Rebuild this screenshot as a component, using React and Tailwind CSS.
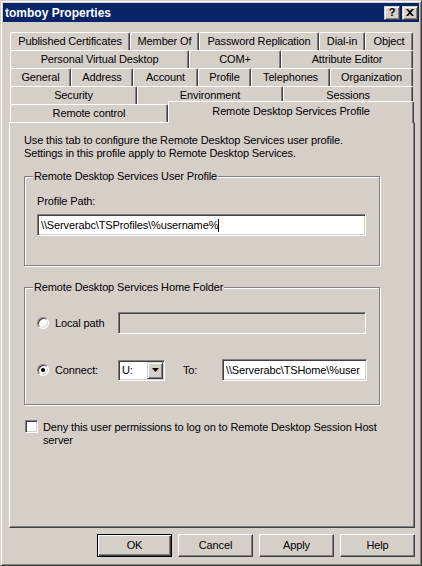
import React from "react";

const rows = [
  [
    ["Published Certificates", "w-[120px]"],
    ["Member Of", "w-[69px]"],
    ["Password Replication", "w-[120px]"],
    ["Dial-in", "w-[46px]"],
    ["Object", "w-[48px]"],
  ],
  [
    ["Personal Virtual Desktop", "w-[179px]"],
    ["COM+", "w-[92px]"],
    ["Attribute Editor", "w-[132px]"],
  ],
  [
    ["General", "w-[61px]"],
    ["Address", "w-[62px]"],
    ["Account", "w-[65px]"],
    ["Profile", "w-[53px]"],
    ["Telephones", "w-[79px]"],
    ["Organization", "w-[83px]"],
  ],
  [
    ["Security", "w-[127px]"],
    ["Environment", "w-[146px]"],
    ["Sessions", "w-[130px]"],
  ],
];

const sunken =
  "border border-t-[#808080] border-l-[#808080] border-b-white border-r-white shadow-[inset_1px_1px_0_#404040,inset_-1px_-1px_0_#d4d0c8]";
const raised =
  "border border-t-white border-l-white border-b-[#404040] border-r-[#404040] shadow-[inset_-1px_-1px_0_#808080]";

function Tab({ label, w }) {
  return (
    <div
      className={`${w} shrink-0 h-[18px] flex items-center justify-center border-t border-l border-r border-t-white border-l-white border-r-[#404040] rounded-t-[2px] shadow-[inset_-1px_0_0_#808080] whitespace-nowrap`}
    >
      {label}
    </div>
  );
}

function Group({ label, className, children }) {
  return (
    <div
      className={`relative w-[356px] border border-[#808080] shadow-[inset_1px_1px_0_#fff,1px_1px_0_#fff] ${className}`}
    >
      <span className="absolute -top-[7px] left-[8px] px-[1px] bg-[#d4d0c8] leading-[13px] whitespace-nowrap">
        {label}
      </span>
      {children}
    </div>
  );
}

function Radio({ checked }) {
  return (
    <div
      className={`w-[12px] h-[12px] rounded-full bg-white flex items-center justify-center ${sunken}`}
    >
      {checked && <div className="w-[4px] h-[4px] rounded-full bg-black" />}
    </div>
  );
}

function Button({ children, primary }) {
  if (primary) {
    return (
      <div className="w-[75px] h-[23px] border border-black">
        <div className="w-full h-full flex items-center justify-center shadow-[inset_1px_1px_0_#fff,inset_-1px_-1px_0_#404040,inset_-2px_-2px_0_#808080]">
          {children}
        </div>
      </div>
    );
  }
  return (
    <div className={`w-[75px] h-[23px] flex items-center justify-center ${raised}`}>
      {children}
    </div>
  );
}

function CaptionButton({ children }) {
  return (
    <div className="w-[16px] h-[14px] bg-[#d4d0c8] flex items-center justify-center border border-t-[#d4d0c8] border-l-[#d4d0c8] border-b-[#404040] border-r-[#404040] shadow-[inset_1px_1px_0_#fff,inset_-1px_-1px_0_#808080]">
      {children}
    </div>
  );
}

export default function App() {
  return (
    <div
      className="w-[422px] h-[566px] bg-[#d4d0c8] text-black text-[11px] tracking-[-0.13px] border border-t-[#d4d0c8] border-l-[#d4d0c8] border-b-[#404040] border-r-[#404040] shadow-[inset_1px_1px_0_#fff,inset_-1px_-1px_0_#808080] p-[2px] flex flex-col"
      style={{ fontFamily: "'Liberation Sans', Arial, sans-serif" }}
    >
      {/* caption */}
      <div className="h-[19px] shrink-0 bg-[#0a246a] flex items-center pl-[2px] pr-[1px]">
        <span className="text-white font-bold text-[12px] tracking-normal flex-1">tomboy Properties</span>
        <div className="flex gap-[2px] items-center">
          <CaptionButton>
            <span className="font-bold text-[11px] leading-none -mt-[1px]">?</span>
          </CaptionButton>
          <CaptionButton>
            <svg width="8" height="7" viewBox="0 0 8 7">
              <path d="M0 0h2l2 2 2-2h2L5 3.5 8 7H6L4 5 2 7H0l3-3.5z" fill="#000" />
            </svg>
          </CaptionButton>
        </div>
      </div>

      <div className="flex-1 flex flex-col pl-[6px] pr-[4px] pt-[10px]">
        {/* tabs */}
        <div className="ml-[1px] mr-[2px]">
          {rows.map((row, i) => (
            <div key={i} className="flex h-[18px]">
              {row.map(([label, w]) => (
                <Tab key={label} label={label} w={w} />
              ))}
            </div>
          ))}
          <div className="flex h-[18px] items-end">
            <Tab label="Remote control" w="w-[158px]" />
            <div className="relative z-10 -mb-[1px] w-[246px] shrink-0 h-[22px] bg-[#d4d0c8] flex items-center justify-center pb-[2px] border-t border-l border-r border-t-white border-l-white border-r-[#404040] rounded-t-[2px] shadow-[inset_-1px_0_0_#808080] whitespace-nowrap">
              Remote Desktop Services Profile
            </div>
          </div>
        </div>

        {/* panel */}
        <div className="h-[406px] shrink-0 border border-t-white border-l-white border-b-[#404040] border-r-[#404040] shadow-[inset_-1px_-1px_0_#808080] pl-[14px] pt-[11px]">
          <p className="leading-[13px]">
            Use this tab to configure the Remote Desktop Services user profile.
            <br />
            Settings in this profile apply to Remote Desktop Services.
          </p>

          <Group label="Remote Desktop Services User Profile" className="mt-[16px] h-[90px] pl-[12px] pt-[18px]">
            <div className="leading-[13px]">Profile Path:</div>
            <div className={`mt-[6px] w-[329px] h-[22px] bg-white flex items-center pl-[3px] ${sunken}`}>
              <span>\\Serverabc\TSProfiles\%username%</span>
              <span className="w-px h-[13px] bg-black" />
            </div>
          </Group>

          <Group label="Remote Desktop Services Home Folder" className="mt-[21px] h-[118px] pl-[12px] pt-[24px]">
            <div className="flex items-center h-[22px]">
              <div className="w-[81px] flex items-center gap-[6px]">
                <Radio />
                <span>Local path</span>
              </div>
              <div className={`w-[248px] h-[22px] bg-[#d4d0c8] ${sunken}`} />
            </div>
            <div className="flex items-center h-[22px] mt-[25px]">
              <div className="w-[81px] flex items-center gap-[6px]">
                <Radio checked />
                <span>Connect:</span>
              </div>
              <div className={`w-[47px] h-[21px] bg-white flex items-center justify-between pl-[3px] pr-[1px] ${sunken}`}>
                <span>U:</span>
                <div className="w-[16px] h-[17px] bg-[#d4d0c8] flex items-center justify-center border border-t-[#d4d0c8] border-l-[#d4d0c8] border-b-[#404040] border-r-[#404040] shadow-[inset_1px_1px_0_#fff,inset_-1px_-1px_0_#808080]">
                  <svg width="7" height="4" viewBox="0 0 7 4">
                    <path d="M0 0h7L3.5 4z" fill="#000" />
                  </svg>
                </div>
              </div>
              <span className="ml-[18px] w-[39px]">To:</span>
              <div className={`w-[145px] h-[22px] bg-white flex items-center pl-[3px] overflow-hidden whitespace-nowrap ${sunken}`}>
                \\Serverabc\TSHome\%user
              </div>
            </div>
          </Group>

          <div className="flex items-start mt-[15px] ml-[1px]">
            <div className={`w-[13px] h-[13px] shrink-0 bg-white ${sunken}`} />
            <p className="ml-[5px] w-[345px] leading-[13px] pt-[1px]">
              Deny this user permissions to log on to Remote Desktop Session Host server
            </p>
          </div>
        </div>

        {/* buttons */}
        <div className="flex justify-end gap-[6px] mt-[6px]">
          <Button primary>OK</Button>
          <Button>Cancel</Button>
          <Button>Apply</Button>
          <Button>Help</Button>
        </div>
      </div>
    </div>
  );
}
